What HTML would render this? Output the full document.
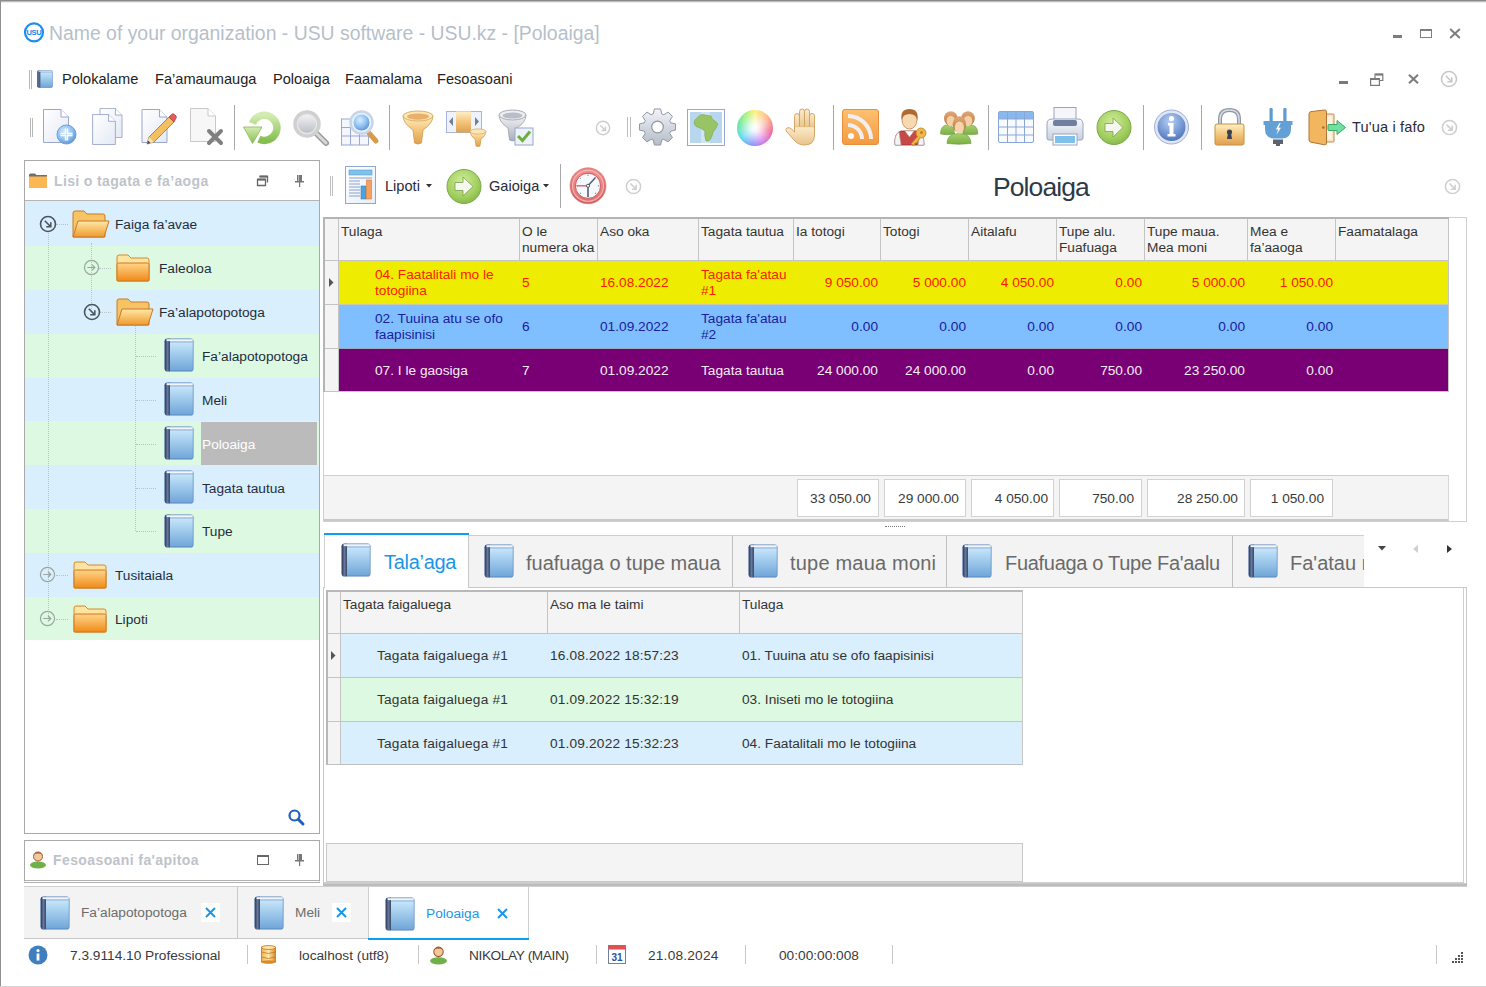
<!DOCTYPE html>
<html><head><meta charset="utf-8">
<style>
*{box-sizing:border-box;margin:0;padding:0}
html,body{width:1486px;height:987px;overflow:hidden;background:#fff}
body{position:relative;font-family:"Liberation Sans",sans-serif;font-size:13.7px;color:#333}
.a{position:absolute;white-space:nowrap}
.w{position:absolute;left:0;top:0;width:1486px;height:987px}
.t{position:absolute;white-space:nowrap;line-height:1}
svg.i{position:absolute;overflow:visible}
</style></head><body>
<svg width="0" height="0" style="position:absolute">
<defs>
<linearGradient id="gBook" x1="0" y1="0" x2="0" y2="1"><stop offset="0" stop-color="#c6e6fb"/><stop offset="1" stop-color="#70a6d8"/></linearGradient>
<linearGradient id="gSpine" x1="0" y1="0" x2="1" y2="0"><stop offset="0" stop-color="#2c3856"/><stop offset="0.5" stop-color="#66789c"/><stop offset="1" stop-color="#3a4868"/></linearGradient>
<symbol id="book" viewBox="0 0 30 34">
<rect x="0.5" y="0.5" width="29" height="33" rx="2.8" fill="#5580bd"/>
<rect x="6" y="4.2" width="22.8" height="28.4" fill="url(#gBook)"/>
<rect x="6" y="3" width="22.8" height="1.6" fill="#a9c7e6"/>
<path d="M3.2 0.8 H6 V33.2 H3.2 Q0.8 33.2 0.8 30.8 V3.2 Q0.8 0.8 3.2 0.8Z" fill="url(#gSpine)"/>
<rect x="2.6" y="1.2" width="26.2" height="1.9" fill="#f2f4f7"/>
</symbol>
<linearGradient id="gFold" x1="0" y1="0" x2="0" y2="1"><stop offset="0" stop-color="#ffe9a8"/><stop offset="1" stop-color="#f09a2c"/></linearGradient>
<linearGradient id="gFoldC" x1="0" y1="0" x2="0" y2="1"><stop offset="0" stop-color="#ffd58a"/><stop offset="1" stop-color="#f08a18"/></linearGradient>
<symbol id="foldOpen" viewBox="0 0 38 28">
<path d="M1 3 Q1 1 3 1 L12 1 L15 4 L31 4 Q33 4 33 6 L33 27 L1 27 Z" fill="#f7c465" stroke="#c97a25" stroke-width="1"/>
<path d="M6 11 L37 11 L32 27 L1 27 Z" fill="url(#gFold)" stroke="#c9772a" stroke-width="1"/>
</symbol>
<symbol id="foldClosed" viewBox="0 0 34 28">
<path d="M1 3 Q1 1 3 1 L12 1 L15 4 L31 4 Q33 4 33 6 L33 27 L1 27 Z" fill="#ffe3a0" stroke="#d08a30" stroke-width="1"/>
<rect x="1" y="9" width="32" height="18" rx="1.5" fill="url(#gFoldC)" stroke="#d0781c" stroke-width="1"/>
</symbol>
<symbol id="circArrow" viewBox="0 0 18 18">
<circle cx="9" cy="9" r="7.5" fill="none" stroke="currentColor" stroke-width="1.6"/>
<path d="M5.8 5.8 L11.5 11.5 M11.8 7.2 L11.8 11.8 L7.2 11.8" fill="none" stroke="currentColor" stroke-width="1.6"/>
</symbol>
<symbol id="circRight" viewBox="0 0 18 18">
<circle cx="9" cy="9" r="7.5" fill="none" stroke="currentColor" stroke-width="1.3"/>
<path d="M4.5 9 L12.5 9 M9.5 6 L12.5 9 L9.5 12" fill="none" stroke="currentColor" stroke-width="1.3"/>
</symbol>
</defs>
</svg>

<!-- window frame -->
<div class="a" style="left:0;top:0;width:1486px;height:1px;background:#8a8a8a"></div>
<div class="a" style="left:0;top:1px;width:1486px;height:1px;background:#bcbcbc"></div>
<div class="a" style="left:0;top:2px;width:1486px;height:1px;background:#ececec"></div>
<div class="a" style="left:0;top:0;width:1px;height:987px;background:#8f8f8f"></div>
<div class="a" style="left:0;top:986px;width:1486px;height:1px;background:#d4d4d4"></div>

<!-- title bar -->
<svg class="i" style="left:24px;top:22px" width="20" height="20" viewBox="0 0 20 20">
<circle cx="10" cy="10.3" r="9" fill="#fff" stroke="#1d8ef0" stroke-width="2.2"/>
<text x="10" y="12.8" font-family="Liberation Sans" font-size="7.6" font-weight="bold" fill="#1d86ea" text-anchor="middle" letter-spacing="-0.3">USU</text>
</svg>
<div class="t" style="left:49px;top:24px;font-size:19.4px;color:#b6bfca">Name of your organization - USU software - USU.kz - [Poloaiga]</div>
<div class="a" style="left:1393px;top:35px;width:9px;height:2.5px;background:#7d7d7d"></div>
<div class="a" style="left:1420px;top:29px;width:12px;height:9px;border:1.3px solid #7d7d7d;border-top-width:2.5px"></div>
<svg class="i" style="left:1449px;top:28px" width="12" height="11" viewBox="0 0 12 11"><path d="M1.2 1 L10.8 10 M10.8 1 L1.2 10" stroke="#7d7d7d" stroke-width="2"/></svg>

<!-- menu bar -->
<div class="a" style="left:29px;top:70px;width:1px;height:19px;background:#b8b8b8"></div>
<div class="a" style="left:31px;top:70px;width:1px;height:19px;background:#b8b8b8"></div>
<svg class="i" style="left:37px;top:70px" width="16" height="18"><use href="#book" width="16" height="18"/></svg>
<div class="t" style="left:62px;top:72px;font-size:14.6px;color:#222">Polokalame</div>
<div class="t" style="left:155px;top:72px;font-size:14.6px;color:#222">Fa’amaumauga</div>
<div class="t" style="left:273px;top:72px;font-size:14.6px;color:#222">Poloaiga</div>
<div class="t" style="left:345px;top:72px;font-size:14.6px;color:#222">Faamalama</div>
<div class="t" style="left:437px;top:72px;font-size:14.6px;color:#222">Fesoasoani</div>
<div class="a" style="left:1339px;top:81px;width:9px;height:2.5px;background:#7a7a7a"></div>
<svg class="i" style="left:1370px;top:73px" width="14" height="13" viewBox="0 0 14 13"><path d="M5 5.5 V1.2 H12.8 V7.5 H9.5" fill="none" stroke="#7a7a7a" stroke-width="1.2"/><path d="M5.5 1.6 H12.8" stroke="#7a7a7a" stroke-width="2"/><rect x="0.6" y="5.6" width="8.8" height="6.8" fill="#fff" stroke="#7a7a7a" stroke-width="1.2"/><path d="M0.6 6 H9.4" stroke="#7a7a7a" stroke-width="2"/></svg>
<svg class="i" style="left:1408px;top:74px" width="11" height="10" viewBox="0 0 11 10"><path d="M1 0.8 L10 9.2 M10 0.8 L1 9.2" stroke="#7a7a7a" stroke-width="2"/></svg>
<svg class="i" style="left:1440px;top:70px;color:#c8c8c8" width="18" height="18"><use href="#circArrow" width="18" height="18"/></svg>

<!-- main toolbar -->
<div class="a" style="left:30px;top:118px;width:1px;height:19px;background:#b8b8b8"></div>
<div class="a" style="left:32px;top:118px;width:1px;height:19px;background:#b8b8b8"></div>
<svg width="0" height="0" style="position:absolute"><defs>
<linearGradient id="gPage" x1="0" y1="0" x2="1" y2="1"><stop offset="0" stop-color="#ffffff"/><stop offset="1" stop-color="#e4e9f4"/></linearGradient>
<symbol id="page" viewBox="0 0 26 34"><path d="M0.5 0.5 H18 L25.5 8 V33.5 H0.5 Z" fill="url(#gPage)" stroke="#9aa6cc" stroke-width="1"/><path d="M18 0.5 V8 H25.5" fill="#fff" stroke="#9aa6cc" stroke-width="1"/></symbol>
<radialGradient id="gBlueBall" cx="0.4" cy="0.35" r="0.7"><stop offset="0" stop-color="#d8ecff"/><stop offset="0.6" stop-color="#8cc0f0"/><stop offset="1" stop-color="#5a90d0"/></radialGradient>
<linearGradient id="gGold" x1="0" y1="0" x2="0" y2="1"><stop offset="0" stop-color="#fff0c8"/><stop offset="0.5" stop-color="#f3c57a"/><stop offset="1" stop-color="#dfa050"/></linearGradient>
<linearGradient id="gSilver" x1="0" y1="0" x2="0" y2="1"><stop offset="0" stop-color="#f4f5f8"/><stop offset="1" stop-color="#a8aeb8"/></linearGradient>
</defs></svg>
<!-- new -->
<svg class="i" style="left:43px;top:109px" width="34" height="36" viewBox="0 0 34 36"><use href="#page" x="0" y="0" width="26" height="34"/><circle cx="23.5" cy="25.5" r="9.5" fill="url(#gBlueBall)" stroke="#6a9fd8" stroke-width="1"/><path d="M23.5 19.5 V31.5 M17.5 25.5 H29.5" stroke="#fff" stroke-width="3.4"/><path d="M23.5 19.5 V31.5 M17.5 25.5 H29.5" stroke="#8ab8e8" stroke-width="1.2" opacity="0.35"/></svg>
<!-- copy -->
<svg class="i" style="left:92px;top:108px" width="32" height="37" viewBox="0 0 32 37"><use href="#page" x="7" y="0" width="24" height="30"/><use href="#page" x="0" y="6" width="24" height="31"/></svg>
<!-- edit -->
<svg class="i" style="left:141px;top:109px" width="35" height="37" viewBox="0 0 35 37"><use href="#page" x="0" y="0" width="27" height="34"/><path d="M6 35 L8 28 L28 8 L33 13 L13 33 Z" fill="#f2c060" stroke="#b07a30" stroke-width="0.9"/><path d="M28 8 L30.5 5.5 Q32 4 33.5 5.5 L35 7 Q36 8.5 34.5 10 L33 13 Z" fill="#e85a5a" stroke="#b04040" stroke-width="0.8"/><path d="M6 35 L8 28 L13 33 Z" fill="#f6e0c0"/><path d="M6 35 L7 31.5 L9.5 34 Z" fill="#444"/></svg>
<!-- delete -->
<svg class="i" style="left:190px;top:108px" width="34" height="37" viewBox="0 0 34 37"><path d="M0.5 0.5 H18 L25.5 8 V33.5 H0.5 Z" fill="#f7f7f7" stroke="#c8c8c8"/><path d="M18 0.5 V8 H25.5" fill="#fff" stroke="#c8c8c8"/><path d="M19 23 L31 35 M31 23 L19 35" stroke="#7f7f7f" stroke-width="4" stroke-linecap="round"/></svg>
<div class="a" style="left:234px;top:105px;width:1px;height:45px;background:#a8a8a8"></div>
<!-- refresh -->
<svg class="i" style="left:243px;top:110px" width="39" height="35" viewBox="0 0 39 35"><defs><linearGradient id="gRef" x1="0" y1="0" x2="0" y2="1"><stop offset="0" stop-color="#d4ecb0"/><stop offset="1" stop-color="#86bf50"/></linearGradient></defs><path d="M16 29.2 A12.6 12.6 0 1 0 9.5 13.5" fill="none" stroke="url(#gRef)" stroke-width="7.4"/><path d="M16 29.2 A12.6 12.6 0 1 0 9.5 13.5" fill="none" stroke="#7fb050" stroke-width="7.4" stroke-opacity="0.25" stroke-dasharray="0.8 200" /><path d="M0.5 17 L19 17 L9.5 33.5 Z" fill="url(#gRef)" stroke="#88b858" stroke-width="0.8"/></svg>
<!-- search -->
<svg class="i" style="left:293px;top:110px" width="37" height="36" viewBox="0 0 37 36"><path d="M22 22 L33 33" stroke="#9a9a9a" stroke-width="6" stroke-linecap="round"/><path d="M22 22 L33 33" stroke="#d8d8d8" stroke-width="3" stroke-linecap="round"/><circle cx="14" cy="14" r="12" fill="#e8e8e8" stroke="#d0d0d0" stroke-width="3.5"/><circle cx="14" cy="14" r="9" fill="url(#gSilver)" opacity="0.7"/></svg>
<!-- search grid -->
<svg class="i" style="left:341px;top:110px" width="39" height="36" viewBox="0 0 39 36"><rect x="0.5" y="9" width="27" height="26" fill="#f4f6fc" stroke="#9aa8d4"/><path d="M0.5 17.5 H27.5 M0.5 26 H27.5 M9.5 9 V35 M18.5 9 V35" stroke="#9aa8d4" stroke-width="1"/><path d="M27 22 L35 31" stroke="#d89a50" stroke-width="5" stroke-linecap="round"/><circle cx="20.5" cy="12.5" r="11" fill="#e8f0fc" stroke="#c8d4e8" stroke-width="2.5"/><circle cx="20.5" cy="12.5" r="8" fill="url(#gBlueBall)"/></svg>
<div class="a" style="left:389px;top:105px;width:1px;height:45px;background:#a8a8a8"></div>
<!-- filter -->
<svg class="i" style="left:402px;top:110px" width="32" height="35" viewBox="0 0 32 35"><path d="M1 6 Q1 13 11 20 L12.5 33 Q16 35 19.5 33 L21 20 Q31 13 31 6 Z" fill="url(#gGold)" stroke="#d09848" stroke-width="0.8"/><ellipse cx="16" cy="6" rx="15" ry="5" fill="#fbe6b8" stroke="#d8a860" stroke-width="0.9"/><ellipse cx="16" cy="6.6" rx="11" ry="3.2" fill="#e8b068"/></svg>
<!-- column filter -->
<svg class="i" style="left:446px;top:111px" width="41" height="36" viewBox="0 0 41 36"><rect x="0.5" y="0.5" width="35" height="21" fill="#eef2fa" stroke="#a8b4dc"/><rect x="10" y="0.5" width="15" height="21" fill="url(#gGold)"/><path d="M7 6 V15 L3 10.5Z M29 6 V15 L33 10.5Z" fill="#6f7f9f"/><path d="M24 20 Q24 25 29 28 L30 35 Q32 36 34 35 L35 28 Q40 25 40 20Z" fill="url(#gGold)" stroke="#d09848" stroke-width="0.7"/><ellipse cx="32" cy="20.5" rx="8" ry="2.6" fill="#fbe6b8" stroke="#d8a860" stroke-width="0.7"/></svg>
<!-- filter check -->
<svg class="i" style="left:498px;top:109px" width="36" height="37" viewBox="0 0 36 37"><path d="M1 6 Q1 13 10 19 L11.5 31 Q14.5 33 17.5 31 L19 19 Q28 13 28 6 Z" fill="url(#gSilver)" stroke="#9aa0aa" stroke-width="0.8"/><ellipse cx="14.5" cy="6" rx="13.5" ry="5" fill="#eceef2" stroke="#a0a6b0" stroke-width="0.9"/><ellipse cx="14.5" cy="6.6" rx="10" ry="3" fill="#b8bec8"/><rect x="17" y="19" width="18" height="17" fill="#eef2fa" stroke="#98a6d0"/><path d="M20 27 L24.5 31.5 L32 22.5" fill="none" stroke="#6cb040" stroke-width="3"/></svg>
<svg class="i" style="left:595px;top:120px;color:#cdcdcd" width="16" height="16"><use href="#circArrow" width="16" height="16"/></svg>
<div class="a" style="left:627px;top:117px;width:1px;height:20px;background:#bdbdbd"></div>
<div class="a" style="left:630px;top:117px;width:1px;height:20px;background:#bdbdbd"></div>
<!-- gear -->
<svg class="i" style="left:638px;top:108px" width="39" height="38" viewBox="-19.5 -19 39 38"><defs><linearGradient id="gGear" x1="0" y1="0" x2="0" y2="1"><stop offset="0" stop-color="#f2f4f8"/><stop offset="1" stop-color="#b4bcc8"/></linearGradient></defs><path d="M-4.21 -13.14 L-3.10 -18.04 L3.10 -18.04 L4.21 -13.14 L6.32 -12.27 L10.56 -14.94 L14.94 -10.56 L12.27 -6.32 L13.14 -4.21 L18.04 -3.10 L18.04 3.10 L13.14 4.21 L12.27 6.32 L14.94 10.56 L10.56 14.94 L6.32 12.27 L4.21 13.14 L3.10 18.04 L-3.10 18.04 L-4.21 13.14 L-6.32 12.27 L-10.56 14.94 L-14.94 10.56 L-12.27 6.32 L-13.14 4.21 L-18.04 3.10 L-18.04 -3.10 L-13.14 -4.21 L-12.27 -6.32 L-14.94 -10.56 L-10.56 -14.94 L-6.32 -12.27Z" fill="url(#gGear)" stroke="#9098a6" stroke-width="1" stroke-linejoin="round"/><circle r="5.8" fill="#fff" stroke="#9098a6" stroke-width="1.2"/></svg>
<!-- map -->
<svg class="i" style="left:687px;top:109px" width="39" height="38" viewBox="0 0 39 38"><rect x="0.5" y="0.5" width="37" height="36" fill="#fff" stroke="#98a6d4"/><rect x="3" y="3" width="32" height="31" fill="#b8d6ee"/><rect x="14" y="3" width="9" height="31" fill="#d4e6f6" opacity="0.85"/><path d="M10 9 Q14 4 18 6 L24 7 Q25 11 28 12 L31 15 Q29 20 26 23 Q25 29 22 32 L19 32 Q17 26 18 22 Q15 20 13 19 Q8 18 7 14 Q7 11 10 9Z" fill="#98c466" stroke="#7aa64c" stroke-width="0.6"/></svg>
<!-- color wheel -->
<div class="a" style="left:737px;top:110px;width:36px;height:36px;border-radius:50%;background:radial-gradient(circle at 50% 50%, #fff 0, rgba(255,255,255,0.85) 18%, rgba(255,255,255,0) 72%),conic-gradient(from 0deg,#fff070,#ffb080 50deg,#f06090 100deg,#d070e8 150deg,#8090f8 190deg,#50d8f0 235deg,#60e890 290deg,#a8f070 330deg,#fff070)"></div>
<!-- hand -->
<svg class="i" style="left:785px;top:108px" width="36" height="38" viewBox="0 0 36 38"><defs><linearGradient id="gHand" x1="0" y1="0" x2="0" y2="1"><stop offset="0" stop-color="#fbeacc"/><stop offset="1" stop-color="#e9c488"/></linearGradient></defs>
<g fill="url(#gHand)" stroke="#cf9f5f" stroke-width="0.9">
<path d="M9.5 24 V8.5 Q9.5 5.5 12 5.5 Q14.5 5.5 14.5 8.5 V20 Z"/>
<path d="M14.5 20 V3.5 Q14.5 1 17 1 Q19.5 1 19.5 3.5 V20 Z"/>
<path d="M19.5 20 V3.5 Q19.5 1 22 1 Q24.5 1 24.5 3.5 V20 Z"/>
<path d="M24.5 21 V8 Q24.5 5.5 27 5.5 Q29.5 5.5 29.5 8 V21 Z"/>
<path d="M9.5 19 L29.5 19 V27 Q29.5 37 19.5 37 Q13 37 9 32 L1.5 23.5 Q0 21.5 2 20 Q4 18.8 6.2 20.8 L9.5 24Z"/>
</g><path d="M10 19.5 H29" stroke="#f7e2bc" stroke-width="1.5"/></svg>
<div class="a" style="left:833px;top:105px;width:1px;height:45px;background:#a8a8a8"></div>
<!-- rss -->
<svg class="i" style="left:842px;top:109px" width="38" height="37" viewBox="0 0 38 37"><defs><linearGradient id="gRss" x1="0" y1="0" x2="0" y2="1"><stop offset="0" stop-color="#ffc070"/><stop offset="1" stop-color="#f49a40"/></linearGradient></defs><rect x="0.5" y="0.5" width="36" height="35" rx="2.5" fill="url(#gRss)" stroke="#e89040"/><circle cx="9" cy="27" r="3" fill="#fff"/><path d="M6 16 A14 14 0 0 1 20 30" fill="none" stroke="#f0f0f0" stroke-width="4"/><path d="M6 7 A23 23 0 0 1 29 30" fill="none" stroke="#f0f0f0" stroke-width="4"/></svg>
<!-- user key -->
<svg class="i" style="left:893px;top:107px" width="36" height="39" viewBox="0 0 36 39"><path d="M2 38 Q1 26 8 24 L24 24 Q31 26 31 38Z" fill="#c84848" stroke="#983030" stroke-width="0.8"/><path d="M2 38 Q1 28 6 25 L8 38Z M31 38 Q31 28 27 25 L25 38Z" fill="#f4f4f4" stroke="#aaa" stroke-width="0.6"/><path d="M12 24 L16.5 30 L21 24Z" fill="#fff" stroke="#aaa" stroke-width="0.6"/><ellipse cx="16.5" cy="13" rx="7.5" ry="9" fill="#f8d8b0" stroke="#c08050" stroke-width="0.8"/><path d="M8.5 13 Q7 2 16.5 2 Q26 2 24.5 13 Q23 7 16.5 7 Q10 7 8.5 13Z" fill="#b06a30"/><circle cx="28" cy="26" r="5" fill="#f0b848" stroke="#c08020" stroke-width="0.8"/><circle cx="28.5" cy="25.5" r="1.5" fill="#c08020"/><path d="M25 29 L18 37 L21 38.5 L22 36 L23.5 36 L27 31" fill="#f0b848" stroke="#c08020" stroke-width="0.8"/></svg>
<!-- users -->
<svg class="i" style="left:940px;top:111px" width="38" height="34" viewBox="0 0 38 34"><defs><linearGradient id="gUB" x1="0" y1="0" x2="0" y2="1"><stop offset="0" stop-color="#a8d070"/><stop offset="1" stop-color="#78b040"/></linearGradient><linearGradient id="gHair" x1="0" y1="0" x2="0" y2="1"><stop offset="0" stop-color="#e0a878"/><stop offset="1" stop-color="#b87840"/></linearGradient></defs>
<g stroke="#6f9a48" stroke-width="0.6" fill="url(#gUB)"><path d="M0.5 23 Q0.5 14 7.5 14 Q14.5 14 14.5 23 Q7.5 24.5 0.5 23Z"/><path d="M22.7 23 Q22.7 14 30.3 14 Q37.9 14 37.9 23 Q30.3 24.5 22.7 23Z"/></g>
<g fill="url(#gHair)"><ellipse cx="10.8" cy="7.5" rx="6.8" ry="7.3"/><ellipse cx="28" cy="7.5" rx="6.8" ry="7.3"/></g>
<g fill="#f4d0a4"><ellipse cx="10.8" cy="10" rx="4.3" ry="5.2"/><ellipse cx="28" cy="10" rx="4.3" ry="5.2"/></g>
<path d="M7 32.5 Q7 22.5 19 22.5 Q31 22.5 31 32.5 Q19 34 7 32.5Z" fill="url(#gUB)" stroke="#6f9a48" stroke-width="0.6"/>
<ellipse cx="19.4" cy="13.5" rx="6.8" ry="8.2" fill="url(#gHair)"/>
<ellipse cx="19.4" cy="16.5" rx="4.6" ry="6" fill="#f6d4aa"/>
</svg>
<div class="a" style="left:988px;top:105px;width:1px;height:45px;background:#a8a8a8"></div>
<!-- table -->
<svg class="i" style="left:998px;top:111px" width="37" height="33" viewBox="0 0 37 33"><rect x="0.5" y="0.5" width="35" height="31" rx="1.5" fill="#f8fafe" stroke="#8aa6d8"/><rect x="1" y="1" width="34" height="7" fill="#8ab8ec"/><path d="M1 8 H35 M1 16 H35 M1 24 H35 M9.5 1 V31 M18 1 V31 M26.5 1 V31" stroke="#8aa6d8" stroke-width="1"/></svg>
<!-- printer -->
<svg class="i" style="left:1046px;top:107px" width="38" height="39" viewBox="0 0 38 39"><defs><linearGradient id="gPr" x1="0" y1="0" x2="0" y2="1"><stop offset="0" stop-color="#f8f9fc"/><stop offset="1" stop-color="#c8cfe0"/></linearGradient></defs><rect x="8" y="0.5" width="22" height="16" fill="#f4f6fa" stroke="#9aa4c0"/><path d="M1 17 Q1 12 6 12 H32 Q37 12 37 17 V31 Q37 33 35 33 H3 Q1 33 1 31Z" fill="url(#gPr)" stroke="#9aa4c0"/><rect x="7" y="13" width="24" height="6" rx="2" fill="#6f7f9f"/><rect x="7" y="27" width="24" height="11" fill="#fff" stroke="#9aa4c0"/><rect x="9" y="29" width="20" height="7" fill="#7fbfec"/></svg>
<!-- green arrow -->
<svg class="i" style="left:1096px;top:110px" width="36" height="35" viewBox="0 0 36 35"><circle cx="18" cy="17.5" r="17" fill="url(#gGreen)" stroke="#78aa48" stroke-width="1"/><path d="M9 13.5 H17 V8 L27 17.5 L17 27 V21.5 H9 Z" fill="#f4f8ee" stroke="#7aa050" stroke-width="0.8"/></svg>
<div class="a" style="left:1143px;top:105px;width:1px;height:45px;background:#a8a8a8"></div>
<!-- info -->
<svg class="i" style="left:1153px;top:109px" width="37" height="36" viewBox="0 0 37 36"><defs><radialGradient id="gInfo" cx="0.45" cy="0.3" r="0.7"><stop offset="0" stop-color="#b8d0f4"/><stop offset="1" stop-color="#4f78c0"/></radialGradient></defs><circle cx="18.5" cy="18" r="17" fill="#dfe6f4" stroke="#9fb0d4"/><circle cx="18.5" cy="18" r="14" fill="url(#gInfo)"/><circle cx="18.5" cy="9.5" r="2.6" fill="#fff"/><path d="M15 14 H20.5 V25 H22.5 V27.5 H14.5 V25 H16.5 V16.5 H15Z" fill="#fff"/></svg>
<div class="a" style="left:1201px;top:105px;width:1px;height:45px;background:#a8a8a8"></div>
<!-- lock -->
<svg class="i" style="left:1214px;top:108px" width="31" height="38" viewBox="0 0 31 38"><path d="M6 17 V11 Q6 2 15.5 2 Q25 2 25 11 V17" fill="none" stroke="#9098a6" stroke-width="4"/><path d="M6 17 V11 Q6 2 15.5 2 Q25 2 25 11 V17" fill="none" stroke="#d8dce4" stroke-width="1.5"/><rect x="1" y="16" width="29" height="21" rx="2" fill="url(#gGold)" stroke="#c89040" stroke-width="1"/><circle cx="15.5" cy="24" r="2.6" fill="#3a4450"/><path d="M14 25 L13 31 H18 L17 25Z" fill="#3a4450"/></svg>
<!-- plug -->
<svg class="i" style="left:1263px;top:108px" width="30" height="38" viewBox="0 0 30 38"><rect x="6.5" y="0" width="3.2" height="14" rx="1.2" fill="#5d9bd2"/><rect x="20.3" y="0" width="3.2" height="14" rx="1.2" fill="#5d9bd2"/><path d="M0.5 13 H29.5 V17 H28 V21 Q28 30 19.5 30.5 H10.5 Q2 30 2 21 V17 H0.5 Z" fill="#62a0d6"/><path d="M16.5 15 L12.8 21.5 H15.2 L13.2 27 L18 19.8 H15.6 L17.6 15Z" fill="#fff"/><rect x="10" y="31.5" width="10" height="4.5" fill="#5c6270"/><rect x="13" y="35.5" width="4" height="2.5" fill="#5c6270"/></svg>
<!-- door -->
<svg class="i" style="left:1307px;top:109px" width="40" height="37" viewBox="0 0 40 37"><rect x="15" y="5" width="12" height="28" rx="1" fill="#f5e7c6" stroke="#c08a40" stroke-width="1"/><rect x="18" y="7.5" width="7" height="23" fill="#fbf3e2"/><path d="M2 5 Q2 3 4 2.6 L17.5 1 Q19.5 0.8 19.5 2.8 V34 Q19.5 36.2 17.5 35.8 L4 33.2 Q2 32.8 2 31 Z" fill="#f2b75e" stroke="#ad7436" stroke-width="1"/><circle cx="16.3" cy="18.5" r="1.2" fill="#9a6a3a"/><path d="M22 15.5 H30 V11.5 L38.5 18.5 L30 25.5 V21.5 H22 Q21 21.5 21 20.5 V16.5 Q21 15.5 22 15.5Z" fill="#6fe0a0" stroke="#3aa868" stroke-width="1"/></svg>
<div class="t" style="left:1352px;top:120px;font-size:14.6px;color:#2a2a3a;letter-spacing:0.15px">Tu'ua i fafo</div>
<svg class="i" style="left:1441px;top:119px;color:#cdcdcd" width="17" height="17"><use href="#circArrow" width="17" height="17"/></svg>


<!-- left panel -->
<div class="a" style="left:24px;top:160px;width:296px;height:674px;border:1px solid #a9a9a9;background:#fff"></div>
<div class="a" style="left:25px;top:200px;width:294px;height:1px;background:#b5b5b5"></div>
<svg class="i" style="left:29px;top:173px" width="18" height="15" viewBox="0 0 18 15"><path d="M0 2 Q0 0.5 1.5 0.5 H6 L7.5 2 H18 V15 H0 Z" fill="#6f6f6f"/><rect x="0" y="3.5" width="18" height="11.5" fill="#fbb852"/></svg>
<div class="t" style="left:54px;top:174px;font-size:14px;font-weight:bold;color:#bec3ca;letter-spacing:0.36px">Lisi o tagata e fa’aoga</div>
<svg class="i" style="left:256px;top:175px" width="13" height="12" viewBox="0 0 13 12"><path d="M3.5 1.5 H11.5 V7.5 M1.5 4.5 H9.5 V10.5 H1.5 Z" fill="none" stroke="#666" stroke-width="1.3"/><path d="M1.5 4.5 H9.5 M3.5 1.5 H11.5" stroke="#666" stroke-width="2"/></svg>
<svg class="i" style="left:294px;top:174px" width="11" height="13" viewBox="0 0 11 13"><path d="M3 1 H8 V7 H10 V8.5 H1 V7 H3 Z" fill="#777"/><rect x="5" y="8" width="1.2" height="5" fill="#777"/><rect x="4" y="1" width="1" height="6" fill="#bbb"/></svg>

<div class="a" style="left:25px;top:201px;width:294px;height:45px;background:#d9effd"></div>
<div class="a" style="left:25px;top:246px;width:294px;height:44px;background:#ddf9e2"></div>
<div class="a" style="left:25px;top:290px;width:294px;height:44px;background:#d9effd"></div>
<div class="a" style="left:25px;top:334px;width:294px;height:44px;background:#ddf9e2"></div>
<div class="a" style="left:25px;top:378px;width:294px;height:43px;background:#d9effd"></div>
<div class="a" style="left:25px;top:421px;width:294px;height:44px;background:#ddf9e2"></div>
<div class="a" style="left:25px;top:465px;width:294px;height:44px;background:#d9effd"></div>
<div class="a" style="left:25px;top:509px;width:294px;height:44px;background:#ddf9e2"></div>
<div class="a" style="left:25px;top:553px;width:294px;height:44px;background:#d9effd"></div>
<div class="a" style="left:25px;top:597px;width:294px;height:43px;background:#ddf9e2"></div>
<div class="a" style="left:201px;top:422px;width:116px;height:43px;background:#bbbbbb"></div>

<!-- tree lines -->
<div class="a" style="left:48px;top:233px;width:0;height:385px;border-left:1px dotted #b9c2c9"></div>
<div class="a" style="left:91px;top:243px;width:0;height:70px;border-left:1px dotted #b9c2c9"></div>
<div class="a" style="left:135px;top:322px;width:0;height:209px;border-left:1px dotted #b9c2c9"></div>
<div class="a" style="left:56px;top:224px;width:12px;height:0;border-top:1px dotted #b9c2c9"></div>
<div class="a" style="left:99px;top:268px;width:12px;height:0;border-top:1px dotted #b9c2c9"></div>
<div class="a" style="left:99px;top:312px;width:12px;height:0;border-top:1px dotted #b9c2c9"></div>
<div class="a" style="left:136px;top:356px;width:20px;height:0;border-top:1px dotted #b9c2c9"></div>
<div class="a" style="left:136px;top:400px;width:20px;height:0;border-top:1px dotted #b9c2c9"></div>
<div class="a" style="left:136px;top:444px;width:20px;height:0;border-top:1px dotted #b9c2c9"></div>
<div class="a" style="left:136px;top:488px;width:20px;height:0;border-top:1px dotted #b9c2c9"></div>
<div class="a" style="left:136px;top:531px;width:20px;height:0;border-top:1px dotted #b9c2c9"></div>
<div class="a" style="left:56px;top:575px;width:12px;height:0;border-top:1px dotted #b9c2c9"></div>
<div class="a" style="left:56px;top:619px;width:12px;height:0;border-top:1px dotted #b9c2c9"></div>

<svg class="i" style="left:39px;top:215px;color:#4a545e" width="18" height="18"><use href="#circArrow" width="18" height="18"/></svg>
<svg class="i" style="left:83px;top:259px;color:#9aa6a0" width="17" height="17"><use href="#circRight" width="17" height="17"/></svg>
<svg class="i" style="left:83px;top:303px;color:#4a545e" width="18" height="18"><use href="#circArrow" width="18" height="18"/></svg>
<svg class="i" style="left:39px;top:566px;color:#9aa6a0" width="17" height="17"><use href="#circRight" width="17" height="17"/></svg>
<svg class="i" style="left:39px;top:610px;color:#9aa6a0" width="17" height="17"><use href="#circRight" width="17" height="17"/></svg>

<svg class="i" style="left:72px;top:210px" width="38" height="28"><use href="#foldOpen" width="38" height="28"/></svg>
<svg class="i" style="left:116px;top:254px" width="34" height="28"><use href="#foldClosed" width="34" height="28"/></svg>
<svg class="i" style="left:116px;top:298px" width="38" height="28"><use href="#foldOpen" width="38" height="28"/></svg>
<svg class="i" style="left:164px;top:338px" width="30" height="34"><use href="#book" width="30" height="34"/></svg>
<svg class="i" style="left:164px;top:382px" width="30" height="34"><use href="#book" width="30" height="34"/></svg>
<svg class="i" style="left:164px;top:426px" width="30" height="34"><use href="#book" width="30" height="34"/></svg>
<svg class="i" style="left:164px;top:470px" width="30" height="34"><use href="#book" width="30" height="34"/></svg>
<svg class="i" style="left:164px;top:514px" width="30" height="34"><use href="#book" width="30" height="34"/></svg>
<svg class="i" style="left:73px;top:561px" width="34" height="28"><use href="#foldClosed" width="34" height="28"/></svg>
<svg class="i" style="left:73px;top:605px" width="34" height="28"><use href="#foldClosed" width="34" height="28"/></svg>

<div class="t" style="left:115px;top:218px;color:#1f2d3d">Faiga fa’avae</div>
<div class="t" style="left:159px;top:262px;color:#1f2d3d">Faleoloa</div>
<div class="t" style="left:159px;top:306px;color:#1f2d3d">Fa’alapotopotoga</div>
<div class="t" style="left:202px;top:350px;color:#1f2d3d">Fa’alapotopotoga</div>
<div class="t" style="left:202px;top:394px;color:#1f2d3d">Meli</div>
<div class="t" style="left:202px;top:438px;color:#fff">Poloaiga</div>
<div class="t" style="left:202px;top:482px;color:#1f2d3d">Tagata tautua</div>
<div class="t" style="left:202px;top:525px;color:#1f2d3d">Tupe</div>
<div class="t" style="left:115px;top:569px;color:#1f2d3d">Tusitaiala</div>
<div class="t" style="left:115px;top:613px;color:#1f2d3d">Lipoti</div>

<svg class="i" style="left:288px;top:809px" width="17" height="17" viewBox="0 0 17 17"><circle cx="6.5" cy="6.5" r="5" fill="none" stroke="#1f5fc0" stroke-width="2.2"/><path d="M10.2 10.2 L15 15" stroke="#1f5fc0" stroke-width="3" stroke-linecap="round"/></svg>

<!-- second panel -->
<div class="a" style="left:24px;top:840px;width:296px;height:43px;border:1px solid #a9a9a9;border-bottom:3px double #b0b0b0;background:#fff"></div>
<svg class="i" style="left:29px;top:850px" width="18" height="18" viewBox="0 0 18 18"><ellipse cx="9" cy="15" rx="8" ry="3.5" fill="#6fb04a"/><circle cx="9" cy="6.5" r="4.5" fill="#f0c8a0" stroke="#a05a28" stroke-width="1"/><path d="M4.5 5 Q9 -1 13.5 5 Q12 3 9 3.5 Q6 3 4.5 5Z" fill="#a05a28"/></svg>
<div class="t" style="left:53px;top:853px;font-size:14px;font-weight:bold;color:#bec3ca;letter-spacing:0.4px">Fesoasoani fa'apitoa</div>
<div class="a" style="left:257px;top:855px;width:12px;height:10px;border:1.3px solid #666;border-top-width:2.5px"></div>
<svg class="i" style="left:294px;top:853px" width="11" height="13" viewBox="0 0 11 13"><path d="M3 1 H8 V7 H10 V8.5 H1 V7 H3 Z" fill="#777"/><rect x="5" y="8" width="1.2" height="5" fill="#777"/><rect x="4" y="1" width="1" height="6" fill="#bbb"/></svg>


<!-- content toolbar -->
<div class="a" style="left:330px;top:176px;width:1px;height:20px;background:#c0c0c0"></div>
<div class="a" style="left:332px;top:176px;width:1px;height:20px;background:#c0c0c0"></div>
<svg class="i" style="left:345px;top:166px" width="31" height="38" viewBox="0 0 31 38">
<defs><linearGradient id="gRep" x1="0" y1="0" x2="1" y2="1"><stop offset="0" stop-color="#fff"/><stop offset="1" stop-color="#e6eef8"/></linearGradient></defs>
<rect x="0.5" y="0.5" width="30" height="37" fill="url(#gRep)" stroke="#8fa8d0"/>
<rect x="4" y="4" width="23" height="5" fill="#7fc0ec" stroke="#5a9fd8" stroke-width="0.6"/>
<path d="M4 12 H27 M4 15 H15 M4 18 H15 M4 21 H15 M4 24 H15 M4 27 H15 M4 30 H15" stroke="#8aa0c8" stroke-width="1"/>
<rect x="16" y="20" width="5" height="13" fill="#4fa2df" stroke="#3a80c0" stroke-width="0.6"/>
<rect x="21.5" y="14" width="5" height="19" fill="#f5a060" stroke="#d77a30" stroke-width="0.6"/>
</svg>
<div class="t" style="left:385px;top:179px;font-size:14.6px;color:#2a2a3a">Lipoti</div>
<svg class="i" style="left:426px;top:184px" width="6" height="4"><path d="M0 0 H6 L3 3.5Z" fill="#333"/></svg>
<svg class="i" style="left:446px;top:169px" width="36" height="35" viewBox="0 0 36 35">
<defs><radialGradient id="gGreen" cx="0.45" cy="0.35" r="0.7"><stop offset="0" stop-color="#d2ec9c"/><stop offset="0.65" stop-color="#a2cf60"/><stop offset="1" stop-color="#84b648"/></radialGradient></defs>
<circle cx="18" cy="17.5" r="17" fill="url(#gGreen)" stroke="#78aa48" stroke-width="1"/>
<path d="M9 13.5 H17 V8 L27 17.5 L17 27 V21.5 H9 Z" fill="#f4f8ee" stroke="#7aa050" stroke-width="0.8"/>
</svg>
<div class="t" style="left:489px;top:179px;font-size:14.6px;color:#2a2a3a">Gaioiga</div>
<svg class="i" style="left:543px;top:184px" width="6" height="4"><path d="M0 0 H6 L3 3.5Z" fill="#333"/></svg>
<div class="a" style="left:560px;top:164px;width:1px;height:44px;background:#a8a8a8"></div>
<svg class="i" style="left:569px;top:167px" width="38" height="38" viewBox="0 0 38 38">
<defs><radialGradient id="gClk" cx="0.5" cy="0.4" r="0.6"><stop offset="0.6" stop-color="#f08a8a"/><stop offset="1" stop-color="#d05a5a"/></radialGradient></defs>
<circle cx="19" cy="18.8" r="18" fill="url(#gClk)" stroke="#d87070" stroke-width="0.6"/>
<circle cx="19" cy="18.8" r="15.5" fill="none" stroke="#f6c0c0" stroke-width="1.2" opacity="0.8"/>
<circle cx="19" cy="18.8" r="12.6" fill="#f5f8fc" stroke="#c85858" stroke-width="1"/>
<g fill="#8090a0"><circle cx="19" cy="8.2" r="0.7"/><circle cx="29.6" cy="18.8" r="0.8"/><circle cx="19" cy="29.4" r="0.7"/><circle cx="8.4" cy="18.8" r="0.7"/><circle cx="11.5" cy="11.3" r="0.6"/><circle cx="26.5" cy="26.3" r="0.7"/><circle cx="11.5" cy="26.3" r="0.7"/></g>
<path d="M19 18.8 L26.5 10.5" stroke="#4a5664" stroke-width="1.3"/><path d="M19 18.8 L19 30" stroke="#4a5664" stroke-width="1.5"/><path d="M19 18.8 L7.5 18.8" stroke="#e06060" stroke-width="1.4"/>
<circle cx="19" cy="18.8" r="1.6" fill="#fff" stroke="#4a5664" stroke-width="1"/>
</svg>
<svg class="i" style="left:625px;top:178px;color:#cfcfcf" width="17" height="17"><use href="#circArrow" width="17" height="17"/></svg>
<div class="t" style="left:993px;top:174px;font-size:26.5px;color:#2e3a46;letter-spacing:-0.9px">Poloaiga</div>
<svg class="i" style="left:1444px;top:178px;color:#cfcfcf" width="17" height="17"><use href="#circArrow" width="17" height="17"/></svg>

<!-- main grid -->
<div class="a" style="left:323px;top:217px;width:1144px;height:305px;border:1px solid #d0d0d0;background:#fff"></div>
<div class="a" style="left:323px;top:217px;width:1126px;height:2px;background:#b4b4b4"></div>
<div class="a" style="left:323px;top:217px;width:2px;height:175px;background:#b4b4b4"></div>
<div class="a" style="left:325px;top:219px;width:1124px;height:42px;background:#f4f4f4"></div>
<div class="a" style="left:325px;top:261px;width:13px;height:131px;background:#f4f4f4"></div>
<!-- header separators -->
<div class="a" style="left:338px;top:219px;width:1px;height:173px;background:#c4c4c4"></div>
<div class="a" style="left:519px;top:219px;width:1px;height:42px;background:#c4c4c4"></div>
<div class="a" style="left:597px;top:219px;width:1px;height:42px;background:#c4c4c4"></div>
<div class="a" style="left:698px;top:219px;width:1px;height:42px;background:#c4c4c4"></div>
<div class="a" style="left:793px;top:219px;width:1px;height:42px;background:#c4c4c4"></div>
<div class="a" style="left:880px;top:219px;width:1px;height:42px;background:#c4c4c4"></div>
<div class="a" style="left:968px;top:219px;width:1px;height:42px;background:#c4c4c4"></div>
<div class="a" style="left:1056px;top:219px;width:1px;height:42px;background:#c4c4c4"></div>
<div class="a" style="left:1144px;top:219px;width:1px;height:42px;background:#c4c4c4"></div>
<div class="a" style="left:1247px;top:219px;width:1px;height:42px;background:#c4c4c4"></div>
<div class="a" style="left:1335px;top:219px;width:1px;height:42px;background:#c4c4c4"></div>
<div class="a" style="left:1448px;top:219px;width:1px;height:173px;background:#c4c4c4"></div>
<div class="a" style="left:325px;top:260px;width:1124px;height:1px;background:#c4c4c4"></div>
<div class="a" style="left:325px;top:304px;width:13px;height:1px;background:#c4c4c4"></div>
<div class="a" style="left:325px;top:348px;width:13px;height:1px;background:#c4c4c4"></div>
<div class="a" style="left:325px;top:391px;width:1124px;height:1px;background:#c4c4c4"></div>
<svg class="i" style="left:329px;top:278px" width="5" height="9"><path d="M0 0 L4.5 4.5 L0 9Z" fill="#555"/></svg>
<!-- header text -->
<div class="w" style="font-size:13.7px;color:#333;line-height:16px">
<div class="a" style="left:341px;top:224px">Tulaga</div>
<div class="a" style="left:522px;top:224px">O le<br>numera oka</div>
<div class="a" style="left:600px;top:224px">Aso oka</div>
<div class="a" style="left:701px;top:224px">Tagata tautua</div>
<div class="a" style="left:796px;top:224px">Ia totogi</div>
<div class="a" style="left:883px;top:224px">Totogi</div>
<div class="a" style="left:971px;top:224px">Aitalafu</div>
<div class="a" style="left:1059px;top:224px;white-space:nowrap">Tupe alu.<br>Fuafuaga</div>
<div class="a" style="left:1147px;top:224px;white-space:nowrap">Tupe maua.<br>Mea moni</div>
<div class="a" style="left:1250px;top:224px">Mea e<br>fa’aaoga</div>
<div class="a" style="left:1338px;top:224px">Faamatalaga</div>
</div>
<!-- rows -->
<div class="a" style="left:339px;top:261px;width:1109px;height:43px;background:#eeec00"></div>
<div class="a" style="left:339px;top:305px;width:1109px;height:43px;background:#80bfff"></div>
<div class="a" style="left:339px;top:349px;width:1109px;height:42px;background:#790074"></div>
<div class="a" style="left:339px;top:304px;width:1109px;height:1px;background:#c9c9b0"></div>
<div class="a" style="left:339px;top:348px;width:1109px;height:1px;background:#9aa8c0"></div>
<div class="w" style="font-size:13.7px;line-height:16px">
<div style="color:#ff1a00">
<div class="a" style="left:375px;top:267px">04. Faatalitali mo le<br>totogiina</div>
<div class="a" style="left:522px;top:275px">5</div>
<div class="a" style="left:600px;top:275px">16.08.2022</div>
<div class="a" style="left:701px;top:267px">Tagata fa'atau<br>#1</div>
<div class="a t" style="right:608px;top:276px">9 050.00</div>
<div class="a t" style="right:520px;top:276px">5 000.00</div>
<div class="a t" style="right:432px;top:276px">4 050.00</div>
<div class="a t" style="right:344px;top:276px">0.00</div>
<div class="a t" style="right:241px;top:276px">5 000.00</div>
<div class="a t" style="right:153px;top:276px">1 050.00</div>
</div>
<div style="color:#1a20a0">
<div class="a" style="left:375px;top:311px">02. Tuuina atu se ofo<br>faapisinisi</div>
<div class="a" style="left:522px;top:319px">6</div>
<div class="a" style="left:600px;top:319px">01.09.2022</div>
<div class="a" style="left:701px;top:311px">Tagata fa'atau<br>#2</div>
<div class="a t" style="right:608px;top:320px">0.00</div>
<div class="a t" style="right:520px;top:320px">0.00</div>
<div class="a t" style="right:432px;top:320px">0.00</div>
<div class="a t" style="right:344px;top:320px">0.00</div>
<div class="a t" style="right:241px;top:320px">0.00</div>
<div class="a t" style="right:153px;top:320px">0.00</div>
</div>
<div style="color:#f4eef4">
<div class="a t" style="left:375px;top:364px">07. I le gaosiga</div>
<div class="a t" style="left:522px;top:364px">7</div>
<div class="a t" style="left:600px;top:364px">01.09.2022</div>
<div class="a t" style="left:701px;top:364px">Tagata tautua</div>
<div class="a t" style="right:608px;top:364px">24 000.00</div>
<div class="a t" style="right:520px;top:364px">24 000.00</div>
<div class="a t" style="right:432px;top:364px">0.00</div>
<div class="a t" style="right:344px;top:364px">750.00</div>
<div class="a t" style="right:241px;top:364px">23 250.00</div>
<div class="a t" style="right:153px;top:364px">0.00</div>
</div>
</div>
<!-- footer -->
<div class="a" style="left:324px;top:475px;width:1125px;height:46px;background:#f4f4f4;border-top:1px solid #cfcfcf;border-bottom:2px solid #c8c8c8;border-right:1px solid #d8d8d8"></div>
<div class="w" style="font-size:13.7px;color:#3a3a3a">
<div class="a" style="left:797px;top:479px;width:82px;height:38px;background:#fff;border:1px solid #d2d2d2"></div>
<div class="a" style="left:884px;top:479px;width:82px;height:38px;background:#fff;border:1px solid #d2d2d2"></div>
<div class="a" style="left:971px;top:479px;width:83px;height:38px;background:#fff;border:1px solid #d2d2d2"></div>
<div class="a" style="left:1059px;top:479px;width:83px;height:38px;background:#fff;border:1px solid #d2d2d2"></div>
<div class="a" style="left:1147px;top:479px;width:98px;height:38px;background:#fff;border:1px solid #d2d2d2"></div>
<div class="a" style="left:1250px;top:479px;width:83px;height:38px;background:#fff;border:1px solid #d2d2d2"></div>
<div class="a t" style="right:615px;top:492px">33 050.00</div>
<div class="a t" style="right:527px;top:492px">29 000.00</div>
<div class="a t" style="right:438px;top:492px">4 050.00</div>
<div class="a t" style="right:352px;top:492px">750.00</div>
<div class="a t" style="right:248px;top:492px">28 250.00</div>
<div class="a t" style="right:162px;top:492px">1 050.00</div>
</div>
<div class="a" style="left:885px;top:526px;width:20px;height:0;border-top:1px dotted #777"></div>

<!-- detail tabs -->
<div class="a" style="left:323px;top:587px;width:1144px;height:297px;border:1px solid #c8c8c8;background:#fff"></div>
<div class="a" style="left:1463px;top:588px;width:1px;height:295px;background:#d0d0d0"></div>
<div class="a" style="left:324px;top:882px;width:1140px;height:1px;background:#cfcfcf"></div>
<div class="a" style="left:323px;top:884px;width:1144px;height:2px;background:#bcbcbc"></div>
<div class="a" style="left:468px;top:535px;width:896px;height:53px;background:#f3f3f3;border-top:1px solid #cfcfcf;border-bottom:1px solid #c8c8c8"></div>
<div class="a" style="left:324px;top:533px;width:145px;height:55px;background:#fff;border-left:1px solid #d0d0d0;border-right:1px solid #c8c8c8"></div>
<div class="a" style="left:324px;top:533px;width:145px;height:2px;background:#0aa0f0"></div>
<div class="a" style="left:732px;top:536px;width:1px;height:51px;background:#bfbfbf"></div>
<div class="a" style="left:946px;top:536px;width:1px;height:51px;background:#bfbfbf"></div>
<div class="a" style="left:1232px;top:536px;width:1px;height:51px;background:#bfbfbf"></div>
<svg class="i" style="left:341px;top:543px" width="30" height="34"><use href="#book" width="30" height="34"/></svg>
<svg class="i" style="left:484px;top:544px" width="30" height="34"><use href="#book" width="30" height="34"/></svg>
<svg class="i" style="left:748px;top:544px" width="30" height="34"><use href="#book" width="30" height="34"/></svg>
<svg class="i" style="left:962px;top:544px" width="30" height="34"><use href="#book" width="30" height="34"/></svg>
<svg class="i" style="left:1248px;top:544px" width="30" height="34"><use href="#book" width="30" height="34"/></svg>
<div class="w" style="font-size:20px;color:#6a6a6a">
<div class="t" style="left:384px;top:552px;color:#1a96e8;letter-spacing:-0.3px">Tala’aga</div>
<div class="t" style="left:526px;top:553px">fuafuaga o tupe maua</div>
<div class="t" style="left:790px;top:553px;letter-spacing:0.2px">tupe maua moni</div>
<div class="t" style="left:1005px;top:553px;letter-spacing:-0.3px">Fuafuaga o Tupe Fa'aalu</div>
<div class="a" style="left:1290px;top:553px;width:74px;overflow:hidden;line-height:1">Fa'atau moni</div>
</div>
<svg class="i" style="left:1378px;top:546px" width="8" height="5"><path d="M0 0 H8 L4 4.5Z" fill="#444"/></svg>
<svg class="i" style="left:1413px;top:545px" width="5" height="8"><path d="M5 0 V8 L0 4Z" fill="#cfcfcf"/></svg>
<svg class="i" style="left:1447px;top:545px" width="5" height="8"><path d="M0 0 V8 L5 4Z" fill="#333"/></svg>

<!-- detail grid -->
<div class="a" style="left:326px;top:590px;width:697px;height:175px;border:2px solid #b8b8b8;border-right:1px solid #c8c8c8;border-bottom:1px solid #c0c0c0;background:#fff"></div>
<div class="a" style="left:328px;top:592px;width:694px;height:42px;background:#f4f4f4"></div>
<div class="a" style="left:328px;top:634px;width:13px;height:130px;background:#f4f4f4"></div>
<div class="a" style="left:341px;top:634px;width:681px;height:43px;background:#d9effd"></div>
<div class="a" style="left:341px;top:678px;width:681px;height:43px;background:#ddf9e2"></div>
<div class="a" style="left:341px;top:722px;width:681px;height:42px;background:#d9effd"></div>
<div class="a" style="left:340px;top:592px;width:1px;height:172px;background:#c4c4c4"></div>
<div class="a" style="left:547px;top:592px;width:1px;height:42px;background:#c4c4c4"></div>
<div class="a" style="left:739px;top:592px;width:1px;height:42px;background:#c4c4c4"></div>
<div class="a" style="left:328px;top:633px;width:694px;height:1px;background:#c4c4c4"></div>
<div class="a" style="left:328px;top:677px;width:694px;height:1px;background:#c4c4c4"></div>
<div class="a" style="left:328px;top:721px;width:694px;height:1px;background:#c4c4c4"></div>
<svg class="i" style="left:331px;top:651px" width="5" height="9"><path d="M0 0 L4.5 4.5 L0 9Z" fill="#555"/></svg>
<div class="w" style="color:#333">
<div class="t" style="left:343px;top:598px">Tagata faigaluega</div>
<div class="t" style="left:550px;top:598px">Aso ma le taimi</div>
<div class="t" style="left:742px;top:598px">Tulaga</div>
<div class="t" style="left:377px;top:649px;letter-spacing:0.2px">Tagata faigaluega #1</div>
<div class="t" style="left:550px;top:649px;letter-spacing:0.17px">16.08.2022 18:57:23</div>
<div class="t" style="left:742px;top:649px">01. Tuuina atu se ofo faapisinisi</div>
<div class="t" style="left:377px;top:693px;letter-spacing:0.2px">Tagata faigaluega #1</div>
<div class="t" style="left:550px;top:693px;letter-spacing:0.17px">01.09.2022 15:32:19</div>
<div class="t" style="left:742px;top:693px">03. Iniseti mo le totogiina</div>
<div class="t" style="left:377px;top:737px;letter-spacing:0.2px">Tagata faigaluega #1</div>
<div class="t" style="left:550px;top:737px;letter-spacing:0.17px">01.09.2022 15:32:23</div>
<div class="t" style="left:742px;top:737px">04. Faatalitali mo le totogiina</div>
</div>
<div class="a" style="left:326px;top:843px;width:697px;height:39px;background:#f4f4f4;border:1px solid #c8c8c8"></div>

<!-- bottom document tabs -->
<div class="a" style="left:24px;top:886px;width:1443px;height:1px;background:#cfcfcf"></div>
<div class="a" style="left:24px;top:887px;width:344px;height:52px;background:#f3f3f3;border-bottom:1px solid #c8c8c8"></div>
<div class="a" style="left:237px;top:887px;width:1px;height:52px;background:#c8c8c8"></div>
<div class="a" style="left:368px;top:887px;width:161px;height:53px;background:#fff;border-left:1px solid #d0d0d0;border-right:1px solid #d0d0d0"></div>
<div class="a" style="left:368px;top:938px;width:161px;height:2px;background:#0aa0f0"></div>
<svg class="i" style="left:40px;top:896px" width="30" height="34"><use href="#book" width="30" height="34"/></svg>
<svg class="i" style="left:254px;top:896px" width="30" height="34"><use href="#book" width="30" height="34"/></svg>
<svg class="i" style="left:385px;top:897px" width="30" height="34"><use href="#book" width="30" height="34"/></svg>
<div class="t" style="left:81px;top:906px;color:#6c6c6c">Fa’alapotopotoga</div>
<div class="t" style="left:295px;top:906px;color:#6c6c6c">Meli</div>
<div class="t" style="left:426px;top:907px;color:#1a96e8">Poloaiga</div>
<div class="a" style="left:201px;top:903px;width:19px;height:19px;background:#fff"></div>
<div class="a" style="left:332px;top:903px;width:19px;height:19px;background:#fff"></div>
<svg class="i" style="left:205px;top:907px" width="11" height="11" viewBox="0 0 11 11"><path d="M1 1 L10 10 M10 1 L1 10" stroke="#1a96e8" stroke-width="2"/></svg>
<svg class="i" style="left:336px;top:907px" width="11" height="11" viewBox="0 0 11 11"><path d="M1 1 L10 10 M10 1 L1 10" stroke="#1a96e8" stroke-width="2"/></svg>
<svg class="i" style="left:497px;top:908px" width="11" height="11" viewBox="0 0 11 11"><path d="M1 1 L10 10 M10 1 L1 10" stroke="#1a96e8" stroke-width="2"/></svg>

<!-- status bar -->
<svg class="i" style="left:28px;top:945px" width="20" height="20" viewBox="0 0 20 20"><circle cx="10" cy="10" r="9.5" fill="#3f7fc0"/><rect x="8.6" y="8.5" width="2.8" height="7" fill="#fff"/><circle cx="10" cy="5.6" r="1.6" fill="#fff"/></svg>
<div class="w" style="color:#3a3a3a">
<div class="t" style="left:70px;top:949px">7.3.9114.10 Professional</div>
<div class="t" style="left:299px;top:949px">localhost (utf8)</div>
<div class="t" style="left:469px;top:949px;letter-spacing:-0.4px">NIKOLAY (MAIN)</div>
<div class="t" style="left:648px;top:949px;letter-spacing:0.2px">21.08.2024</div>
<div class="t" style="left:779px;top:949px">00:00:00:008</div>
</div>
<div class="a" style="left:247px;top:945px;width:1px;height:19px;background:#c8c8c8"></div>
<div class="a" style="left:418px;top:945px;width:1px;height:19px;background:#c8c8c8"></div>
<div class="a" style="left:596px;top:945px;width:1px;height:19px;background:#c8c8c8"></div>
<div class="a" style="left:745px;top:945px;width:1px;height:19px;background:#c8c8c8"></div>
<div class="a" style="left:892px;top:945px;width:1px;height:19px;background:#c8c8c8"></div>
<div class="a" style="left:1436px;top:945px;width:1px;height:19px;background:#c8c8c8"></div>
<svg class="i" style="left:261px;top:945px" width="15" height="19" viewBox="0 0 15 19"><defs><linearGradient id="gDb" x1="0" x2="1"><stop offset="0" stop-color="#f0b050"/><stop offset="0.5" stop-color="#ffe8a8"/><stop offset="1" stop-color="#d88a28"/></linearGradient></defs><rect x="0.5" y="2" width="14" height="15" fill="url(#gDb)" stroke="#c07820" stroke-width="0.8"/><ellipse cx="7.5" cy="2.5" rx="7" ry="2" fill="#ffe0a0" stroke="#c07820" stroke-width="0.8"/><path d="M0.5 7 Q7.5 10 14.5 7 M0.5 12 Q7.5 15 14.5 12" stroke="#c07820" fill="none" stroke-width="0.8"/><ellipse cx="7.5" cy="17" rx="7" ry="1.8" fill="#d88a28"/></svg>
<svg class="i" style="left:429px;top:945px" width="19" height="19" viewBox="0 0 18 18"><ellipse cx="9" cy="15" rx="8" ry="3.5" fill="#6fb04a"/><circle cx="9" cy="6.5" r="4.5" fill="#f0c8a0" stroke="#a05a28" stroke-width="1"/><path d="M4.5 5 Q9 -1 13.5 5 Q12 3 9 3.5 Q6 3 4.5 5Z" fill="#a05a28"/></svg>
<svg class="i" style="left:608px;top:945px" width="18" height="19" viewBox="0 0 18 19"><rect x="0.5" y="0.5" width="17" height="18" fill="#fff" stroke="#7080a0"/><rect x="0.5" y="0.5" width="17" height="4" fill="#e05050"/><text x="9" y="16" font-family="Liberation Sans" font-size="10" font-weight="bold" fill="#3050a0" text-anchor="middle">31</text></svg>
<svg class="i" style="left:1450px;top:950px" width="14" height="14" viewBox="0 0 14 14" fill="#555"><rect x="11" y="2" width="2" height="2"/><rect x="8" y="5" width="2" height="2"/><rect x="11" y="5" width="2" height="2"/><rect x="5" y="8" width="2" height="2"/><rect x="8" y="8" width="2" height="2"/><rect x="11" y="8" width="2" height="2"/><rect x="2" y="11" width="2" height="2"/><rect x="5" y="11" width="2" height="2"/><rect x="8" y="11" width="2" height="2"/><rect x="11" y="11" width="2" height="2"/></svg>


<!--BOTTOM-->
</body></html>
